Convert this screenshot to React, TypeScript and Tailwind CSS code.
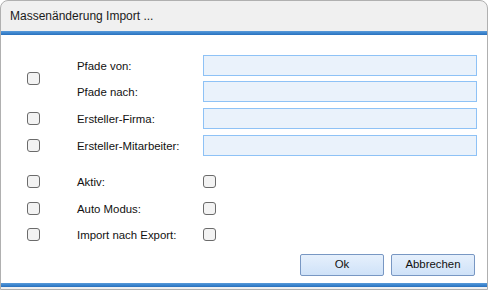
const FONT = { fontFamily: '"Liberation Sans", Arial, sans-serif' };

function Box() {
  return (
    <span className="block w-[13px] h-[13px] rounded-[3px] border border-[#6b6b6b] bg-[#f3f3f3]" />
  );
}

function Field() {
  return (
    <div className="w-[274px] h-[21px] border border-[#8ec2f6] bg-[#eaf2fb]" />
  );
}

function Label({ text }: { text: string }) {
  return (
    <span className="w-[126px] text-[11.4px] leading-[13px] pt-[2px] text-[#111]">
      {text}
    </span>
  );
}

function Btn({ text }: { text: string }) {
  return (
    <button className="w-[84px] h-[22px] rounded-[2px] border border-[#7897c3] bg-gradient-to-b from-[#e6f0fc] to-[#cfe2f8] text-[11.4px] text-[#111]">
      {text}
    </button>
  );
}

function Band() {
  return (
    <div className="h-[4px] bg-gradient-to-b from-[#5a9ad8] via-[#3c86cf] to-[#2a70bc]" />
  );
}

export default function App() {
  return (
    <div
      className="w-[488px] h-[290px] bg-[#f0f0f0] border border-[#b0b0b0] rounded-t-[8px] overflow-hidden flex flex-col"
      style={FONT}
    >
      <div className="h-[30px] shrink-0 flex items-center pl-[9px] text-[12px] text-[#1a1a1a]">
        Massenänderung Import ...
      </div>
      <Band />
      <div className="h-[248px] bg-white pl-[26px] pt-[20px] flex flex-col">
        <div className="flex items-center">
          <span className="w-[50px]">
            <Box />
          </span>
          <div className="flex flex-col gap-[5px]">
            <div className="flex items-center h-[21px]">
              <Label text="Pfade von:" />
              <Field />
            </div>
            <div className="flex items-center h-[21px]">
              <Label text="Pfade nach:" />
              <Field />
            </div>
          </div>
        </div>
        <div className="flex items-center h-[21px] mt-[6px]">
          <span className="w-[50px]">
            <Box />
          </span>
          <Label text="Ersteller-Firma:" />
          <Field />
        </div>
        <div className="flex items-center h-[21px] mt-[6px]">
          <span className="w-[50px]">
            <Box />
          </span>
          <Label text="Ersteller-Mitarbeiter:" />
          <Field />
        </div>
        <div className="flex items-center h-[21px] mt-[15px]">
          <span className="w-[50px]">
            <Box />
          </span>
          <Label text="Aktiv:" />
          <Box />
        </div>
        <div className="flex items-center h-[21px] mt-[6px]">
          <span className="w-[50px]">
            <Box />
          </span>
          <Label text="Auto Modus:" />
          <Box />
        </div>
        <div className="flex items-center h-[21px] mt-[5px]">
          <span className="w-[50px]">
            <Box />
          </span>
          <Label text="Import nach Export:" />
          <Box />
        </div>
        <div className="flex justify-end gap-[7px] mt-[9px] pr-[12px]">
          <Btn text="Ok" />
          <Btn text="Abbrechen" />
        </div>
      </div>
      <Band />
    </div>
  );
}
